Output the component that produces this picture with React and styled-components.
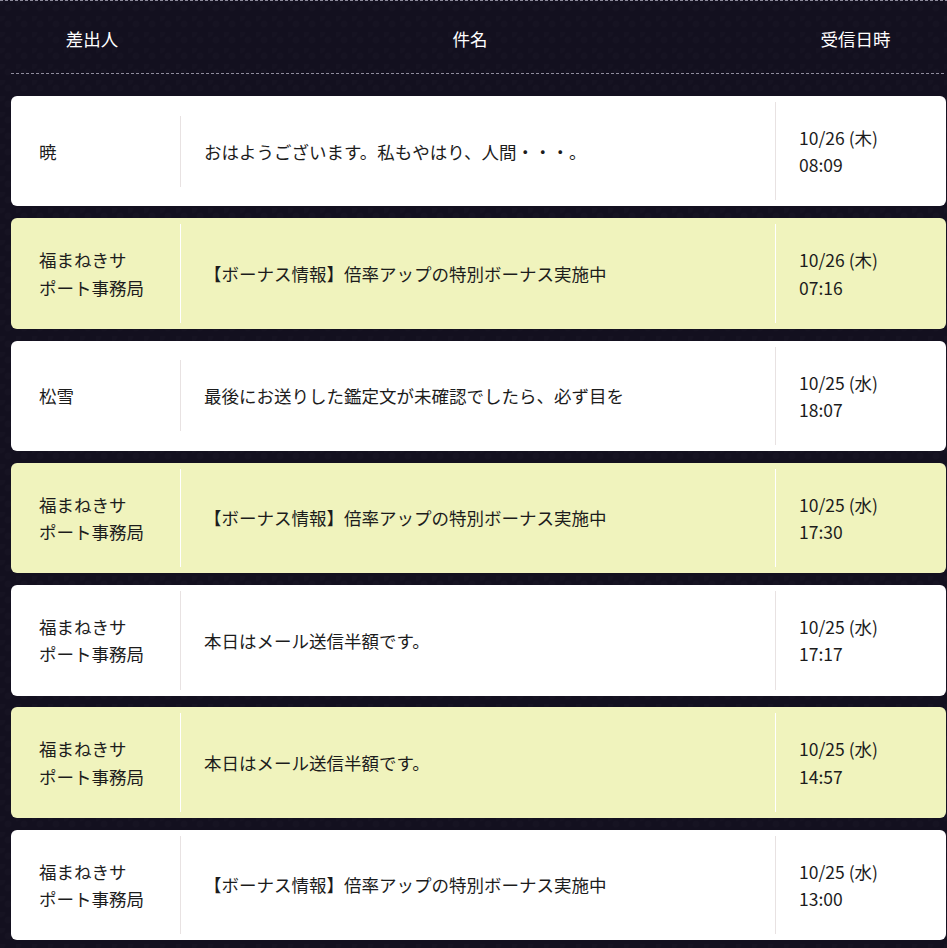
import React from 'react';
import styled, { createGlobalStyle } from 'styled-components';

const messages = [
  { from: '暁', subject: 'おはようございます。私もやはり、人間・・・。', date: '10/26 (木)', time: '08:09', unread: false },
  { from: '福まねきサポ\u2060ート事務局', subject: '【ボーナス情報】倍率アップの特別ボーナス実施中', date: '10/26 (木)', time: '07:16', unread: true },
  { from: '松雪', subject: '最後にお送りした鑑定文が未確認でしたら、必ず目を', date: '10/25 (水)', time: '18:07', unread: false },
  { from: '福まねきサポ\u2060ート事務局', subject: '【ボーナス情報】倍率アップの特別ボーナス実施中', date: '10/25 (水)', time: '17:30', unread: true },
  { from: '福まねきサポ\u2060ート事務局', subject: '本日はメール送信半額です。', date: '10/25 (水)', time: '17:17', unread: false },
  { from: '福まねきサポ\u2060ート事務局', subject: '本日はメール送信半額です。', date: '10/25 (水)', time: '14:57', unread: true },
  { from: '福まねきサポ\u2060ート事務局', subject: '【ボーナス情報】倍率アップの特別ボーナス実施中', date: '10/25 (水)', time: '13:00', unread: false },
];

function App() {
  return (
    <>
      <GlobalStyle />
      <Page lang="ja">
        <TopRule />
        <Header>
          <HeadCell>差出人</HeadCell>
          <HeadCell>件名</HeadCell>
          <HeadCell $last>受信日時</HeadCell>
        </Header>
        <Rule />
        <List>
          {messages.map((m, i) => (
            <Card key={i} $unread={m.unread}>
              <Sender $unread={m.unread}>{m.from}</Sender>
              <Subject>{m.subject}</Subject>
              <DateCell $unread={m.unread}>
                {m.date}
                <br />
                {m.time}
              </DateCell>
            </Card>
          ))}
        </List>
      </Page>
    </>
  );
}

const GlobalStyle = createGlobalStyle`
  body {
    margin: 0;
    background-color: #13101f;
    font-family: "Noto Sans CJK JP", "Noto Sans", sans-serif;
  }
`;

const Page = styled.div`
  min-height: 948px;
  background-color: #13101f;
  background-image:
    radial-gradient(circle at 50% 50%, rgba(255, 255, 255, 0.012) 0 3px, transparent 4px),
    radial-gradient(circle at 0 0, rgba(255, 255, 255, 0.01) 0 5px, transparent 6px);
  background-size: 16px 16px;
`;

const dashes = `
  height: 1px;
  background-image: linear-gradient(to right, #8e8b9c 0 3px, transparent 3px 5px);
  background-size: 5px 1px;
`;

const TopRule = styled.div`
  ${dashes}
`;

const Rule = styled.div`
  ${dashes}
  margin: 0 1px 0 11px;
`;

const Header = styled.div`
  display: grid;
  grid-template-columns: 184px 572px 1fr;
  padding: 24px 0 21px;
`;

const HeadCell = styled.div`
  color: #ffffff;
  font-size: 17.5px;
  font-weight: 400;
  line-height: 27px;
  text-align: center;
  padding-left: ${(p) => (p.$last ? '8px' : '0')};
`;

const List = styled.div`
  display: flex;
  flex-direction: column;
  gap: 11.9px;
  margin: 22px 1px 0 11px;
`;

const Card = styled.div`
  display: flex;
  align-items: center;
  background: ${(p) => (p.$unread ? '#f0f3bd' : '#ffffff')};
  border-radius: 6px;
  padding: 6px 0 6px 28px;
  color: #1c1c1c;
  font-size: 17.5px;
  line-height: 27.2px;
  line-break: strict;
`;

const Sender = styled.div`
  box-sizing: border-box;
  width: 142px;
  flex: none;
  padding: 22px 32px 22px 0;
  border-right: 1px solid ${(p) => (p.$unread ? '#ffffff' : '#e8e2e2')};
`;

const Subject = styled.div`
  flex: 1;
  padding: 22px 23px;
`;

const DateCell = styled.div`
  box-sizing: border-box;
  width: 171px;
  flex: none;
  padding: 22px 23px;
  border-left: 1px solid ${(p) => (p.$unread ? '#ffffff' : '#e8e2e2')};
`;

export default App;
